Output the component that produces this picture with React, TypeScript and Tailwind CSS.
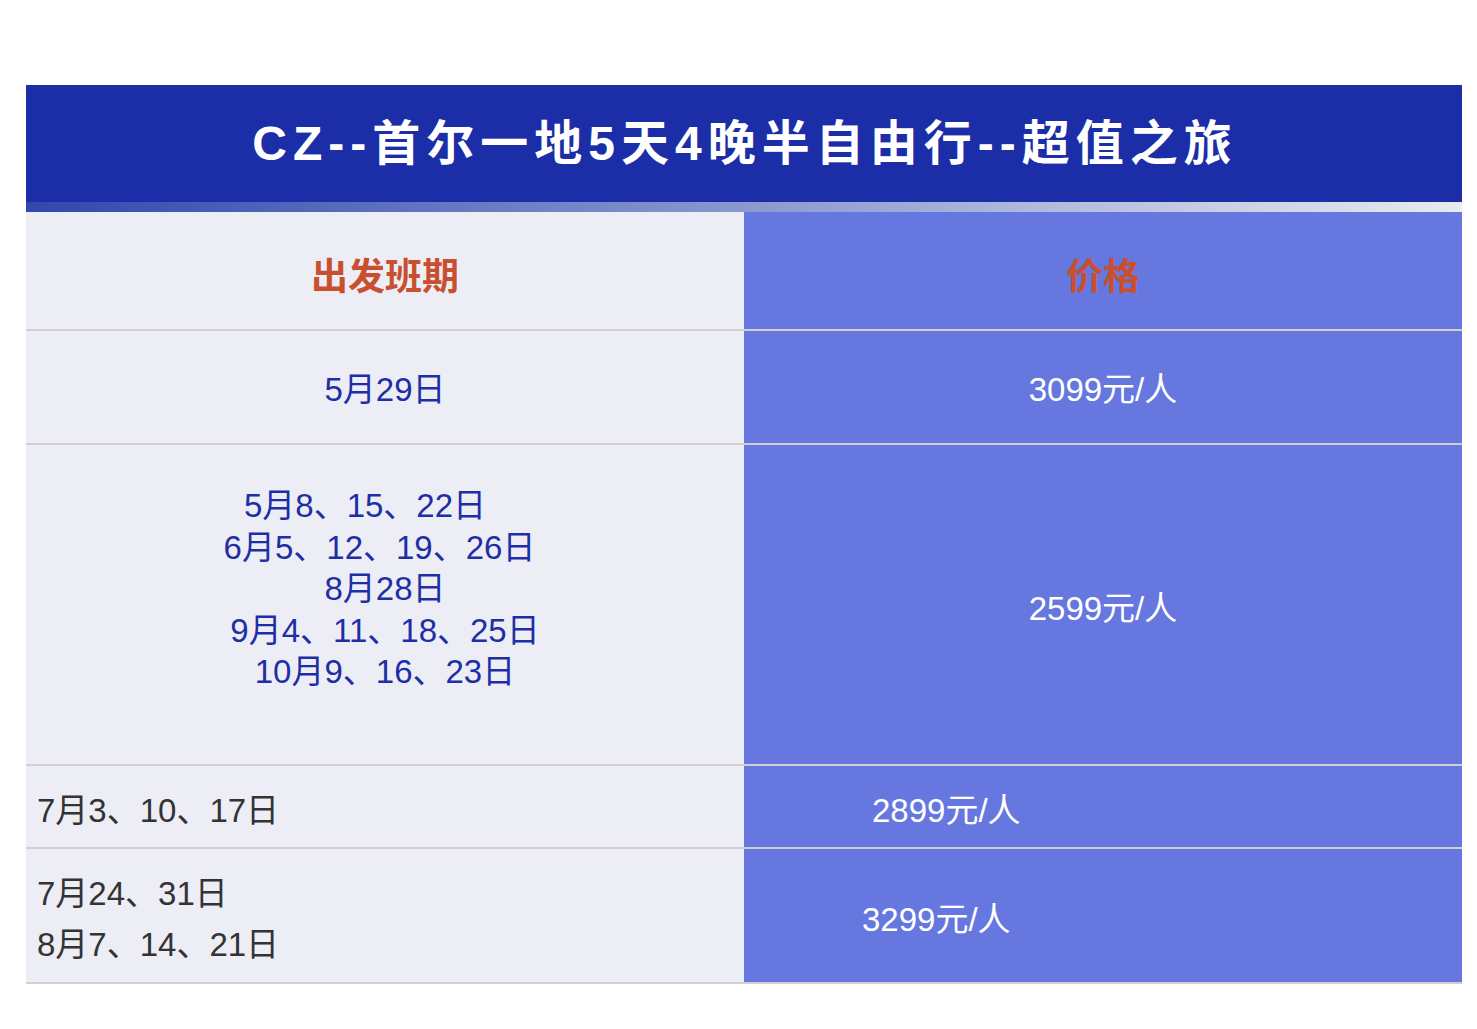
import React from "react";

const FONT = "font-['Liberation_Sans','Noto_Sans_CJK_SC',sans-serif]";

export default function App() {
  return (
    <div className={`bg-white w-[1477px] h-[1029px] pt-[85px] pl-[26px] ${FONT}`}>
      <div className="w-[1436px]">
        <div className="h-[117px] bg-[#1b2ea8] flex items-center justify-center">
          <h1 className="text-white font-bold text-[48px] tracking-[6px] leading-none pl-[2px]">
            CZ--首尔一地5天4晚半自由行--超值之旅
          </h1>
        </div>
        <div className="h-[10px] bg-gradient-to-r from-[#3346ad] via-[#8a98cf] to-[#e8ecee]" />
        <div className="grid grid-cols-2">
          <div className="h-[117px] bg-[#ededf6] flex items-center justify-center pt-[14px]">
            <span className="text-[#c9502f] font-bold text-[37px]">出发班期</span>
          </div>
          <div className="h-[117px] bg-[#6677e0] flex items-center justify-center pt-[14px]">
            <span className="text-[#c9502f] font-bold text-[37px]">价格</span>
          </div>
        </div>
        <div className="h-[2px] bg-[#d0d0d0]" />
        <div className="grid grid-cols-2 text-[33px]">
          <div className="h-[112px] bg-[#ededf6] flex items-center justify-center text-[#1e2fa6] pt-[6px]">
            5月29日
          </div>
          <div className="h-[112px] bg-[#6677e0] flex items-center justify-center text-white pt-[6px]">
            3099元/人
          </div>
        </div>
        <div className="h-[2px] bg-[#d0d0d0]" />
        <div className="grid grid-cols-2 text-[33px]">
          <div className="h-[319px] bg-[#ededf6] flex flex-col items-center text-[#1e2fa6] pt-[40px] leading-[41.5px]">
            <span className="pr-[40px]">5月8、15、22日</span>
            <span className="pr-[11px]">6月5、12、19、26日</span>
            <span>8月28日</span>
            <span>9月4、11、18、25日</span>
            <span>10月9、16、23日</span>
          </div>
          <div className="h-[319px] bg-[#6677e0] flex items-center justify-center text-white pt-[9px]">
            2599元/人
          </div>
        </div>
        <div className="h-[2px] bg-[#d0d0d0]" />
        <div className="grid grid-cols-2 text-[33px]">
          <div className="h-[81px] bg-[#ededf6] flex items-center pl-[11px] text-[#333333] pt-[9px]">
            7月3、10、17日
          </div>
          <div className="h-[81px] bg-[#6677e0] flex items-center pl-[128px] text-white pt-[9px]">
            2899元/人
          </div>
        </div>
        <div className="h-[2px] bg-[#d0d0d0]" />
        <div className="grid grid-cols-2 text-[33px]">
          <div className="h-[133px] bg-[#ededf6] flex flex-col justify-center pl-[11px] text-[#333333] leading-[51px] pt-[6px]">
            <span>7月24、31日</span>
            <span>8月7、14、21日</span>
          </div>
          <div className="h-[133px] bg-[#6677e0] flex items-center pl-[118px] text-white pt-[9px]">
            3299元/人
          </div>
        </div>
        <div className="h-[2px] bg-[#d0d0d0]" />
      </div>
    </div>
  );
}
